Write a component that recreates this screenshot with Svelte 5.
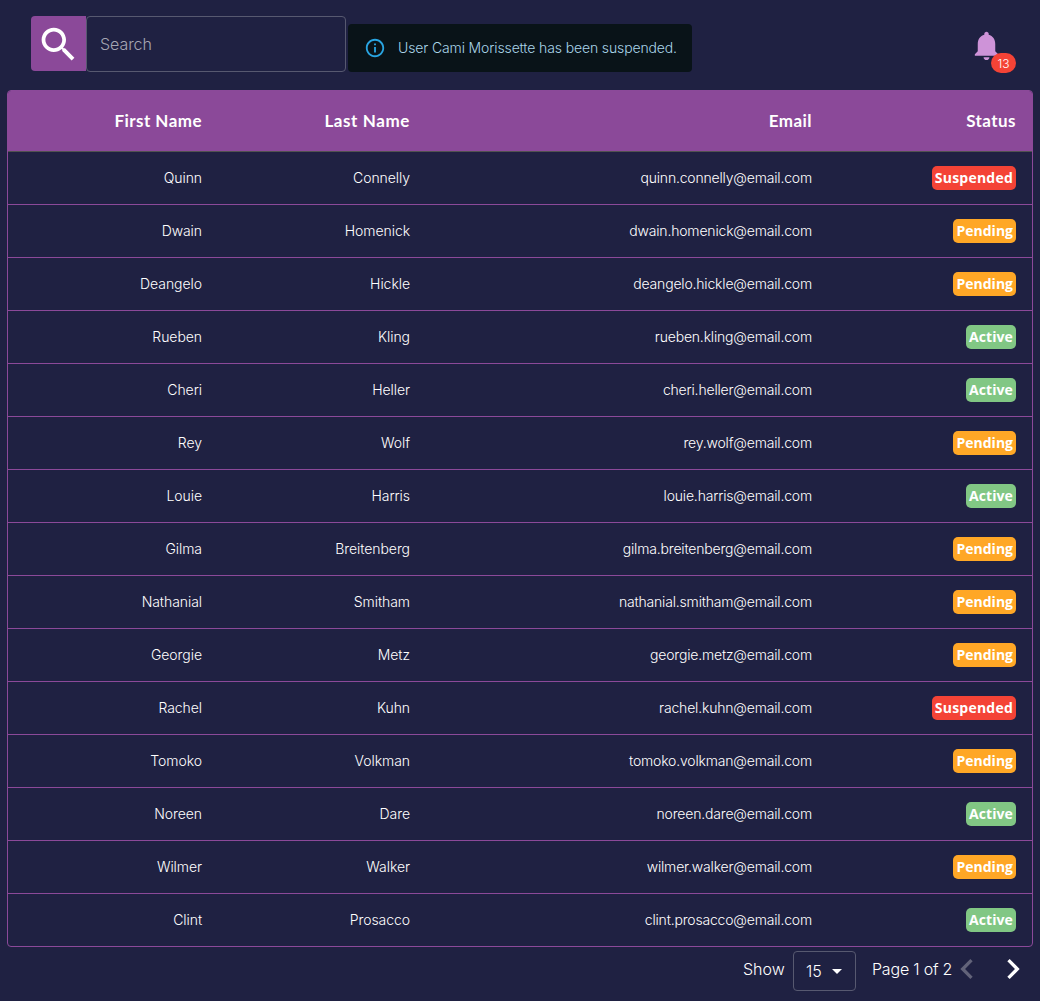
<script>
  const users = [
    ['Quinn', 'Connelly', 'Suspended'],
    ['Dwain', 'Homenick', 'Pending'],
    ['Deangelo', 'Hickle', 'Pending'],
    ['Rueben', 'Kling', 'Active'],
    ['Cheri', 'Heller', 'Active'],
    ['Rey', 'Wolf', 'Pending'],
    ['Louie', 'Harris', 'Active'],
    ['Gilma', 'Breitenberg', 'Pending'],
    ['Nathanial', 'Smitham', 'Pending'],
    ['Georgie', 'Metz', 'Pending'],
    ['Rachel', 'Kuhn', 'Suspended'],
    ['Tomoko', 'Volkman', 'Pending'],
    ['Noreen', 'Dare', 'Active'],
    ['Wilmer', 'Walker', 'Pending'],
    ['Clint', 'Prosacco', 'Active']
  ].map(([first, last, status]) => ({
    first,
    last,
    email: `${first}.${last}@email.com`.toLowerCase(),
    status
  }));
</script>

<div class="page">
  <header class="toolbar">
    <div class="search-icon">
      <svg viewBox="0 0 24 24"><path d="M15.5 14h-.79l-.28-.27C15.41 12.59 16 11.11 16 9.5 16 5.91 13.09 3 9.5 3S3 5.91 3 9.5 5.91 16 9.5 16c1.61 0 3.09-.59 4.23-1.57l.27.28v.79l5 4.99L20.49 19l-4.99-5zm-6 0C7.01 14 5 11.99 5 9.5S7.01 5 9.5 5 14 7.01 14 9.5 11.99 14 9.5 14z" /></svg>
    </div>
    <input class="search" type="text" placeholder="Search" />
    <div class="alert">
      <svg viewBox="0 0 24 24"><path d="M11 7h2v2h-2zm0 4h2v6h-2zm1-9C6.48 2 2 6.48 2 12s4.48 10 10 10 10-4.48 10-10S17.52 2 12 2zm0 18c-4.41 0-8-3.59-8-8s3.59-8 8-8 8 3.59 8 8-3.59 8-8 8z" /></svg>
      <span>User Cami Morissette has been suspended.</span>
    </div>
    <div class="bell">
      <svg viewBox="0 0 24 24"><path d="M12 22c1.1 0 2-.9 2-2h-4c0 1.1.89 2 2 2zm6-6v-5c0-3.07-1.64-5.64-4.5-6.32V4c0-.83-.67-1.5-1.5-1.5s-1.5.67-1.5 1.5v.68C7.63 5.36 6 7.92 6 11v5l-2 2v1h16v-1l-2-2z" /></svg>
      <span class="count">13</span>
    </div>
  </header>

  <div class="table">
    <div class="row head">
      <span>First Name</span>
      <span class="last-title">Last Name</span>
      <span>Email</span>
      <span>Status</span>
    </div>
    {#each users as user}
      <div class="row">
        <span>{user.first}</span>
        <span>{user.last}</span>
        <span class="email">{user.email}</span>
        <span class="status"><b class="chip {user.status.toLowerCase()}">{user.status}</b></span>
      </div>
    {/each}
  </div>

  <footer class="pager">
    <span class="show">Show</span>
    <div class="select">
      <span>15</span>
      <svg viewBox="0 0 24 24"><path d="M7 10l5 5 5-5z" /></svg>
    </div>
    <span class="pages">Page 1 of 2</span>
    <svg class="nav prev" viewBox="0 0 24 24"><path d="M15.41 7.41L14 6l-6 6 6 6 1.41-1.41L10.83 12z" /></svg>
    <svg class="nav" viewBox="0 0 24 24"><path d="M10 6L8.59 7.41 13.17 12l-4.58 4.59L10 18l6-6z" /></svg>
  </footer>
</div>

<style>
  :global(body) {
    background: #1f2142;
  }
  .page {
    box-sizing: border-box;
    height: 1001px;
    padding: 16px 7px 0;
    overflow: hidden;
    background: #1f2142;
    color: #fff;
    font-family: Inter, sans-serif;
    font-weight: 300;
  }
  svg {
    display: block;
    flex: none;
    fill: currentColor;
  }
  .toolbar {
    display: flex;
    align-items: flex-start;
    height: 74px;
    padding: 0 17px 0 24px;
  }
  .search-icon {
    box-sizing: border-box;
    width: 55px;
    height: 55px;
    padding: 6px 5px 4px;
    border-radius: 4px 0 0 4px;
    background: #8b4999;
  }
  .search-icon svg {
    width: 45px;
    height: 45px;
  }
  .search {
    box-sizing: border-box;
    width: 260px;
    height: 56px;
    padding: 0 13px;
    border: 1px solid #575970;
    border-radius: 4px;
    background: none;
    font: 300 16px Inter, sans-serif;
    letter-spacing: -0.05px;
    color: #fff;
  }
  .search::placeholder {
    color: #a5a6b3;
    opacity: 1;
  }
  .alert {
    display: flex;
    align-items: center;
    gap: 12px;
    box-sizing: border-box;
    width: 344px;
    height: 48px;
    margin: 8px 0 0 2px;
    padding-left: 16px;
    border-radius: 4px;
    background: #091318;
    color: #a9d5e9;
    font-size: 14px;
    letter-spacing: -0.13px;
    white-space: nowrap;
  }
  .alert span {
    margin-top: -2px;
  }
  .alert svg {
    width: 22px;
    height: 22px;
    color: #29a5e2;
  }
  .bell {
    position: relative;
    width: 35px;
    height: 35px;
    margin: 12px 12px 0 auto;
    color: #ce93d8;
  }
  .count {
    position: absolute;
    right: -12px;
    bottom: -10px;
    width: 25px;
    height: 20px;
    border-radius: 10px;
    background: #f44336;
    color: #fff;
    font-size: 12px;
    line-height: 21px;
    text-align: center;
  }
  .table {
    border: 1px solid #8b4999;
    border-radius: 4px;
    overflow: hidden;
  }
  .row {
    display: grid;
    grid-template-columns: 210px 208px 402px 204px;
    align-items: center;
    box-sizing: border-box;
    height: 53px;
    border-bottom: 1px solid #8b4999;
    font-size: 14px;
    letter-spacing: -0.06px;
    text-align: right;
  }
  .row:last-child {
    height: 52px;
    border-bottom: 0;
  }
  .row > span {
    padding: 0 16px 2px 0;
  }
  .row > .email {
    letter-spacing: -0.18px;
  }
  .row > .status {
    padding-bottom: 0;
  }
  .head {
    height: 61px;
    background: #8b4999;
    border-bottom-color: #515151;
    font: 700 17px Lato, sans-serif;
    letter-spacing: 0.45px;
  }
  .head .last-title {
    letter-spacing: 0.6px;
  }
  .chip {
    display: inline-block;
    padding: 0 3px;
    border-radius: 5px;
    font: 700 14px/24px "Open Sans", sans-serif;
    letter-spacing: 0;
    vertical-align: top;
  }
  .suspended {
    background: #f44336;
    letter-spacing: 0.22px;
  }
  .pending {
    background: #ffa726;
  }
  .active {
    background: #81c784;
    letter-spacing: 0.1px;
  }
  .pager {
    display: flex;
    align-items: center;
    height: 48px;
    padding-left: 736px;
    font-size: 16px;
    white-space: nowrap;
  }
  .show {
    width: 50px;
    margin-top: -4px;
  }
  .select {
    display: flex;
    align-items: center;
    box-sizing: border-box;
    width: 63px;
    height: 40px;
    padding-left: 12px;
    border: 1px solid #575970;
    border-radius: 4px;
  }
  .select svg {
    width: 24px;
    height: 24px;
  }
  .select span {
    width: 19px;
  }
  .pages {
    width: 75px;
    margin: -4px 0 0 16px;
    letter-spacing: -0.2px;
  }
  .nav {
    width: 40px;
    height: 40px;
    margin-top: -4px;
  }
  .prev {
    margin-right: 6px;
    color: #626379;
  }
</style>
